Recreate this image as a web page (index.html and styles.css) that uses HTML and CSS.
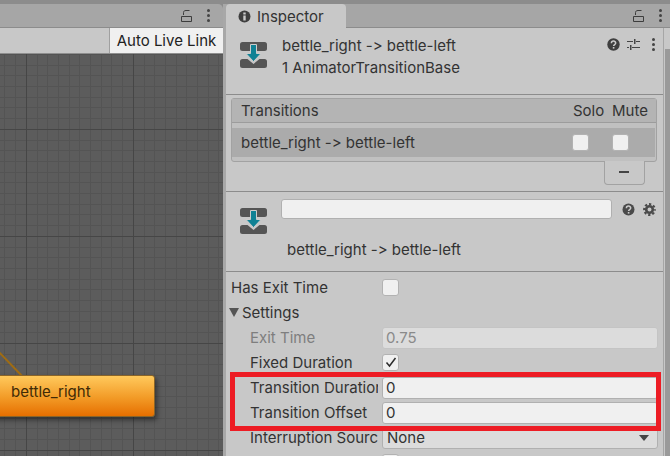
FILE: index.html
```html
<!DOCTYPE html>
<html lang="en">
<head>
    <meta charset="UTF-8">
    <title>Animator Inspector</title>
    <link rel="stylesheet" href="styles.css">
</head>
<body>

    <div class="app">

        <!-- Animator -->
        <div class="animator">
            <div class="tabbar tabbar-left">
                <svg class="ico-lock" width="12" height="12" viewBox="0 0 12 12"><path d="M2.500 5V2.500C2.500 1.200 3.500.5 5 .5h3.500M.5 6.500h10v5H.5z" fill="none" stroke="#3d3d3d"/></svg>
                <span class="dots"><i></i><i></i><i></i></span>
            </div>
            <div class="toolbar">
                <button class="live-link">Auto Live Link</button>
            </div>
            <div class="graph">
                <svg class="link" width="30" height="30" viewBox="0 0 30 30"><path d="M-2 1L23 27" stroke="#a06c12" stroke-width="2"/></svg>
                <div class="node">bettle_right</div>
            </div>
        </div>

        <!-- Inspector -->
        <div class="inspector">
            <div class="tabbar tabbar-right">
                <div class="tab">
                    <svg width="13" height="13" viewBox="0 0 13 13"><circle cx="6.500" cy="6.500" r="6" fill="#3f3f3f"/><rect x="5.300" y="5.500" width="2.400" height="5" fill="#ccc"/><rect x="5.300" y="2.500" width="2.400" height="2" fill="#ccc"/></svg>
                    <span>Inspector</span>
                </div>
                <div class="tab-tools">
                    <svg class="ico-lock" width="12" height="12" viewBox="0 0 12 12"><path d="M2.500 5V2.500C2.500 1.200 3.500.5 5 .5h3.500M.5 6.500h10v5H.5z" fill="none" stroke="#3d3d3d"/></svg>
                    <span class="dots"><i></i><i></i><i></i></span>
                </div>
            </div>

            <div class="body">
                <div class="content">

                    <section class="head">
                        <svg class="ico-transition" width="28" height="28" viewBox="0 0 28 28">
                            <rect x="0" y="1" width="27" height="9" rx="2.500" fill="#555"/>
                            <path d="M0 20.500q0-2.500 2.500-2.500h5l6 5 6-5h5q2.500 0 2.500 2.500v4q0 2.500-2.500 2.500h-22q-2.500 0-2.500-2.500z" fill="#555"/>
                            <path d="M10.500 3.500h6v9h4.500l-7.500 8-7.500-8h4.500z" fill="#0f8194" stroke="#ccc" stroke-width="1"/>
                        </svg>
                        <div class="head-text">
                            <div>bettle_right -&gt; bettle-left</div>
                            <div>1 AnimatorTransitionBase</div>
                        </div>
                        <div class="head-tools">
                            <svg width="13" height="13" viewBox="0 0 13 13"><circle cx="6.500" cy="6.500" r="6.200" fill="#3f3f3f"/><path d="M4.400 5.200c0-2.800 4.300-2.800 4.300-.1 0 1.500-2.100 1.500-2.100 3" fill="none" stroke="#ccc" stroke-width="1.500"/><rect x="5.800" y="9" width="1.600" height="1.600" fill="#ccc"/></svg>
                            <svg width="13" height="13" viewBox="0 0 13 13"><path d="M0 3.500h6M9 3.500h4M0 9.500h2M5 9.500h8" stroke="#444" stroke-width="1.200"/><path d="M7 1h1.500v5H7zM3 7h1.500v5H3z" fill="#444"/></svg>
                            <span class="dots head-dots"><i></i><i></i><i></i></span>
                        </div>
                    </section>

                    <section class="transitions">
                        <div class="list">
                            <div class="list-head">
                                <span class="list-name">Transitions</span>
                                <span class="col-solo">Solo</span>
                                <span class="col-mute">Mute</span>
                            </div>
                            <div class="list-row">
                                <span class="list-name">bettle_right -&gt; bettle-left</span>
                                <span class="check"></span>
                                <span class="check"></span>
                            </div>
                        </div>
                        <div class="list-foot"><div class="remove"></div></div>
                    </section>

                    <section class="name-block">
                        <svg class="ico-transition" width="28" height="28" viewBox="0 0 28 28">
                            <rect x="0" y="1" width="27" height="9" rx="2.500" fill="#555"/>
                            <path d="M0 20.500q0-2.500 2.500-2.500h5l6 5 6-5h5q2.500 0 2.500 2.500v4q0 2.500-2.500 2.500h-22q-2.500 0-2.500-2.500z" fill="#555"/>
                            <path d="M10.500 3.500h6v9h4.500l-7.500 8-7.500-8h4.500z" fill="#0f8194" stroke="#ccc" stroke-width="1"/>
                        </svg>
                        <div class="name-main">
                            <div class="name-top">
                                <div class="input name-input"></div>
                                <svg width="13" height="13" viewBox="0 0 13 13"><circle cx="6.500" cy="6.500" r="6" fill="#4a4a4a"/><path d="M4.400 5.200c0-2.800 4.300-2.800 4.300-.1 0 1.500-2.100 1.500-2.100 3" fill="none" stroke="#ccc" stroke-width="1.500"/><rect x="5.800" y="9" width="1.600" height="1.600" fill="#ccc"/></svg>
                                <svg width="13" height="13" viewBox="0 0 13 13"><circle cx="6.500" cy="6.500" r="3.300" fill="none" stroke="#4a4a4a" stroke-width="2.600"/><circle cx="6.500" cy="6.500" r="5.400" fill="none" stroke="#4a4a4a" stroke-width="2" stroke-dasharray="2.300 1.940" stroke-dashoffset="1.150"/></svg>
                            </div>
                            <div class="name-label">bettle_right -&gt; bettle-left</div>
                        </div>
                    </section>

                    <section class="props">
                        <div class="row">
                            <span class="label">Has Exit Time</span>
                            <span class="check"></span>
                        </div>
                        <div class="row row-fold">
                            <span class="fold"></span>
                            <span>Settings</span>
                        </div>
                        <div class="row row-sub row-off">
                            <span class="label">Exit Time</span>
                            <div class="input input-off">0.75</div>
                        </div>
                        <div class="row row-sub">
                            <span class="label">Fixed Duration</span>
                            <span class="check">
                                <svg width="12" height="11" viewBox="0 0 12 11"><path d="M1.500 5.500l3 3.500 6-8" fill="none" stroke="#2c2c2c" stroke-width="1.500"/></svg>
                            </span>
                        </div>
                        <div class="highlight">
                            <div class="row row-sub">
                                <span class="label">Transition Duration</span>
                                <div class="input">0</div>
                            </div>
                            <div class="row row-sub">
                                <span class="label">Transition Offset</span>
                                <div class="input">0</div>
                            </div>
                        </div>
                        <div class="row row-sub">
                            <span class="label">Interruption Source</span>
                            <div class="select">None<span class="caret"></span></div>
                        </div>
                        <div class="row row-sub">
                            <span class="label"></span>
                            <span class="check"></span>
                        </div>
                    </section>

                </div>
                <div class="scrollbar"><div class="thumb"></div></div>
            </div>
        </div>

    </div>

</body>
</html>
```

FILE: styles.css
```css
html, body {
    margin: 0;
    height: 456px;
    overflow: hidden;
}

body {
    font-family: Inter, "Liberation Sans", sans-serif;
    font-size: 15px;
    font-variant-ligatures: none;
    font-feature-settings: "calt" 0;
    color: #333;
    background-color: #8c8c8c;
}

.app {
    display: flex;
    height: 452px;
    padding-top: 4px;
}

/* shared */

.tabbar {
    display: flex;
    height: 23px;
    background-color: #a6a6a6;
    border-bottom: 1px solid #8c8c8c;
}

.dots {
    display: flex;
    flex-direction: column;
    gap: 2px;
}

    .dots i {
        width: 3px;
        height: 3px;
        border-radius: 50%;
        background-color: #444;
    }

.check {
    display: flex;
    align-items: center;
    justify-content: center;
    box-sizing: border-box;
    width: 17px;
    height: 17px;
    background-color: #f0f0f0;
    border: 1px solid #b2b2b2;
    border-radius: 3px;
}

.input {
    flex: 1;
    box-sizing: border-box;
    height: 22px;
    padding: 0 3px;
    line-height: 20px;
    background-color: #f0f0f0;
    border: 1px solid #b0b0b0;
    border-radius: 3px;
}

/* animator */

.animator {
    width: 226px;
    box-sizing: border-box;
    flex: none;
    display: flex;
    flex-direction: column;
    border-right: 3px solid #a8a8a8;
}

.tabbar-left {
    align-items: center;
    justify-content: flex-end;
    gap: 14px;
    padding-right: 13px;
    border-top-right-radius: 5px;
}

.toolbar {
    display: flex;
    justify-content: flex-end;
    height: 25px;
    background-color: #c8c8c8;
    border-bottom: 1px solid #8f8f8f;
}

.live-link {
    width: 114px;
    padding: 0;
    font: inherit;
    color: #222;
    background-color: #f0f0f0;
    border: none;
    border-left: 1px solid #a0a0a0;
}

.graph {
    position: relative;
    flex: 1;
    overflow: hidden;
    background-color: #5c5c5c;
    background-image:
        linear-gradient(#464646 1px, transparent 1px),
        linear-gradient(90deg, #464646 1px, transparent 1px),
        linear-gradient(#545454 1px, transparent 1px, transparent 11px, #545454 11px, #545454 12px, transparent 12px, transparent 21px, #545454 21px, #545454 22px, transparent 22px, transparent 32px, #545454 32px, #545454 33px, transparent 33px, transparent 43px, #545454 43px, #545454 44px, transparent 44px, transparent 53px, #545454 53px, #545454 54px, transparent 54px, transparent 64px, #545454 64px, #545454 65px, transparent 65px, transparent 75px, #545454 75px, #545454 76px, transparent 76px, transparent 85px, #545454 85px, #545454 86px, transparent 86px, transparent 96px, #545454 96px, #545454 97px, transparent 97px),
        linear-gradient(90deg, #545454 1px, transparent 1px, transparent 11px, #545454 11px, #545454 12px, transparent 12px, transparent 21px, #545454 21px, #545454 22px, transparent 22px, transparent 32px, #545454 32px, #545454 33px, transparent 33px, transparent 43px, #545454 43px, #545454 44px, transparent 44px, transparent 53px, #545454 53px, #545454 54px, transparent 54px, transparent 64px, #545454 64px, #545454 65px, transparent 65px, transparent 75px, #545454 75px, #545454 76px, transparent 76px, transparent 85px, #545454 85px, #545454 86px, transparent 86px, transparent 96px, #545454 96px, #545454 97px, transparent 97px);
    background-size: 107px 107px;
    background-position: 0 -32px, 26px 0, 0 -32px, 26px 0;
}

.link {
    position: absolute;
    left: 0;
    top: 296px;
}

.node {
    position: absolute;
    left: -10px;
    top: 321px;
    box-sizing: border-box;
    width: 165px;
    height: 42px;
    padding: 6px 0 0 20px;
    color: #402a06;
    background: linear-gradient(#ffc95c, #f29a26 55%, #e66f00);
    border: 1px solid #8a6428;
    border-radius: 3px;
    box-shadow: 2px 3px 5px rgba(0, 0, 0, 0.45);
}

/* inspector */

.inspector {
    flex: 1;
    display: flex;
    flex-direction: column;
    min-width: 0;
}

.tabbar-right {
    justify-content: space-between;
}

.tab {
    display: flex;
    align-items: center;
    gap: 6px;
    box-sizing: border-box;
    width: 120px;
    height: 24px;
    padding-left: 12px;
    background-color: #c8c8c8;
    border-top-left-radius: 4px;
    border-top-right-radius: 4px;
}

.tab-tools {
    display: flex;
    align-items: center;
    gap: 14px;
    padding-right: 8px;
}

.body {
    flex: 1;
    display: flex;
    min-height: 0;
    background-color: #c8c8c8;
}

.content {
    flex: 1;
    min-width: 0;
}

.scrollbar {
    width: 6px;
    border-left: 1px solid #a6a6a6;
    padding-top: 21px;
}

    .scrollbar .thumb {
        height: 100%;
        margin-left: 1px;
        background-color: #9a9a9a;
    }

/* header */

.head {
    display: flex;
    box-sizing: border-box;
    height: 67px;
    padding: 7px 8px 0 14px;
    border-bottom: 1px solid #8c8c8c;
}

.ico-transition {
    flex: none;
    margin-top: 6px;
}

.head-text {
    flex: 1;
    margin-left: 14px;
    line-height: 22px;
}

.head-tools {
    display: flex;
    align-items: center;
    gap: 7px;
    height: 18px;
}

.head-dots {
    margin-left: 5px;
}

/* transitions list */

.transitions {
    box-sizing: border-box;
    height: 97px;
    padding: 3px 6px 0 5px;
    border-bottom: 1px solid #8c8c8c;
}

.list {
    background-color: #c0c0c0;
    border: 1px solid #a2a2a2;
    border-radius: 3px;
}

.list-head {
    display: flex;
    align-items: center;
    height: 23px;
    padding: 0 7px 0 9px;
    background-color: #b4b4b4;
    border-bottom: 1px solid #9c9c9c;
}

.list-name {
    flex: 1;
}

.col-solo {
    width: 39px;
}

.col-mute {
    width: 37px;
    white-space: nowrap;
}

.list-row {
    display: flex;
    align-items: center;
    gap: 23px;
    height: 29px;
    margin: 5px 1px 4px 0;
    padding-left: 9px;
    padding-right: 26px;
    background-color: #ababab;
}

.list-foot {
    display: flex;
    justify-content: flex-end;
    padding-right: 12px;
}

.remove {
    position: relative;
    box-sizing: border-box;
    width: 41px;
    height: 24px;
    margin-top: -1px;
    background-color: #c8c8c8;
    border: 1px solid #a2a2a2;
    border-top: none;
    border-radius: 0 0 4px 4px;
}

    .remove::after {
        content: "";
        position: absolute;
        left: 14px;
        top: 10px;
        width: 10px;
        height: 2px;
        background-color: #444;
    }

/* name block */

.name-block {
    display: flex;
    box-sizing: border-box;
    height: 80px;
    padding: 7px 7px 0 14px;
    border-bottom: 1px solid #8c8c8c;
}

    .name-block .ico-transition {
        margin-top: 8px;
    }

.name-main {
    flex: 1;
    margin-left: 13px;
}

.name-top {
    display: flex;
    align-items: center;
    gap: 8px;
}

.name-input {
    height: 20px;
    margin-right: 2px;
}

.name-label {
    margin: 21px 0 0 6px;
    line-height: 20px;
}

/* properties */

.props {
    padding: 3px 5px 0 5px;
}

.row {
    display: flex;
    align-items: center;
    height: 25px;
}

.row-sub {
    padding-left: 19px;
}

.label {
    flex: none;
    width: 151px;
    overflow: hidden;
    white-space: nowrap;
}

.row-sub .label {
    width: 128px;
    margin-right: 4px;
}

.row-off .label {
    color: #7e7e7e;
}

.input-off {
    color: #8a8a8a;
    background-color: #dcdcdc;
    border-color: #c4c4c4;
}

.row-fold {
    gap: 3px;
}

.fold {
    width: 0;
    height: 0;
    border-left: 5px solid transparent;
    border-right: 5px solid transparent;
    border-top: 9px solid #555;
    margin-left: -2px;
}

.select {
    flex: 1;
    box-sizing: border-box;
    display: flex;
    align-items: center;
    justify-content: space-between;
    height: 22px;
    padding: 0 8px 0 4px;
    background-color: #dcdcdc;
    border: 1px solid #b0b0b0;
    border-radius: 3px;
}

.caret {
    width: 0;
    height: 0;
    border-left: 5px solid transparent;
    border-right: 5px solid transparent;
    border-top: 6px solid #444;
}

/* red box drawn over the two rows */

.highlight {
    position: relative;
}

    .highlight::after {
        content: "";
        position: absolute;
        left: -1px;
        right: -3px;
        top: -3px;
        bottom: -6px;
        border: 5px solid #ed1c24;
        pointer-events: none;
    }
```
